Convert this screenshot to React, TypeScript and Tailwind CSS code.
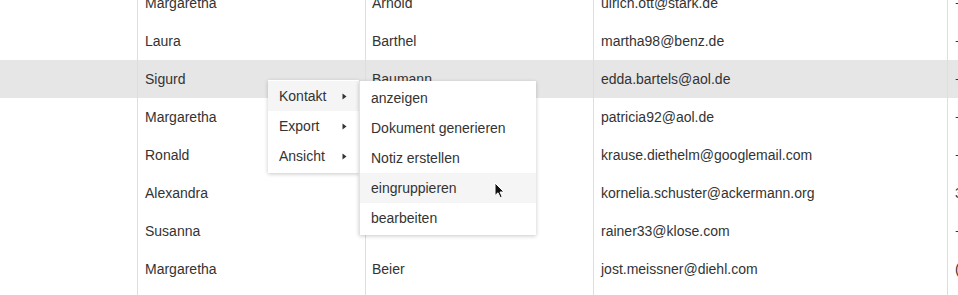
import React from "react";

type Row = { first: string; last: string; email: string; phone: string };

const ROWS: Row[] = [
  { first: "Margaretha", last: "Arnold", email: "ulrich.ott@stark.de", phone: "+49 (0) 8821 12345" },
  { first: "Laura", last: "Barthel", email: "martha98@benz.de", phone: "+49 (0) 7312 44591" },
  { first: "Sigurd", last: "Baumann", email: "edda.bartels@aol.de", phone: "+49 (0) 3301 90211" },
  { first: "Margaretha", last: "", email: "patricia92@aol.de", phone: "+49 (0) 4012 77302" },
  { first: "Ronald", last: "", email: "krause.diethelm@googlemail.com", phone: "+49 (0) 7412 55610" },
  { first: "Alexandra", last: "", email: "kornelia.schuster@ackermann.org", phone: "3591 22048" },
  { first: "Susanna", last: "", email: "rainer33@klose.com", phone: "+49 (0) 6021 11873" },
  { first: "Margaretha", last: "Beier", email: "jost.meissner@diehl.com", phone: "(0811) 448290" },
  { first: "Heinz", last: "Berger", email: "lotte.kraus@web.de", phone: "+49 (0) 2234 90117" },
];

const MAIN_MENU = ["Kontakt", "Export", "Ansicht"];
const SUB_MENU = ["anzeigen", "Dokument generieren", "Notiz erstellen", "eingruppieren", "bearbeiten"];

function Caret() {
  return (
    <svg width="5" height="7" viewBox="0 0 5 7" className="shrink-0">
      <path d="M0.5 0.5 L4.5 3.5 L0.5 6.5 Z" fill="#333" />
    </svg>
  );
}

function Cursor() {
  return (
    <svg width="12" height="17" viewBox="0 0 12 17" className="absolute left-[494px] top-[182px]">
      <path
        d="M1 1 L1 13.5 L4 10.8 L6.2 15.6 L8.2 14.7 L6 10 L10 10 Z"
        fill="#111"
        stroke="#fff"
        strokeWidth="1"
        strokeLinejoin="round"
      />
    </svg>
  );
}

export default function App() {
  return (
    <div
      className="relative w-[958px] h-[295px] overflow-hidden bg-white text-[14px] text-[#333]"
      style={{ fontFamily: '"Liberation Sans", Arial, sans-serif' }}
    >
      <div className="mt-[-16px]">
        {ROWS.map((r, i) => (
          <div key={i} className={`flex h-[38px] items-center ${i === 2 ? "bg-[#e6e6e6]" : ""}`}>
            <div className="w-[137px] h-full shrink-0" />
            <div className="w-[228px] h-full shrink-0 flex items-center border-l border-[#dedede] pl-[7px]">{r.first}</div>
            <div className="w-[228px] h-full shrink-0 flex items-center border-l border-[#dedede] pl-[6px]">{r.last}</div>
            <div className="w-[354px] h-full shrink-0 flex items-center border-l border-[#dedede] pl-[7px]">{r.email}</div>
            <div className="w-[200px] h-full shrink-0 flex items-center border-l border-[#dedede] pl-[7px] whitespace-nowrap">
              {r.phone}
            </div>
          </div>
        ))}
      </div>

      <div className="absolute left-[268px] top-[80px] w-[91px] bg-white pt-[1px] pb-[2px] shadow-[0_1px_4px_rgba(0,0,0,0.22)]">
        {MAIN_MENU.map((m, i) => (
          <div
            key={m}
            className={`flex h-[30px] items-center justify-between pl-[11px] pr-[12px] ${i === 0 ? "bg-[#f5f5f5]" : ""}`}
          >
            <span>{m}</span>
            <Caret />
          </div>
        ))}
      </div>

      <div className="absolute left-[359px] top-[81px] w-[177px] bg-white py-[2px] border-l border-[#e2e2e2] shadow-[0_1px_4px_rgba(0,0,0,0.22)]">
        {SUB_MENU.map((m, i) => (
          <div key={m} className={`flex h-[30px] items-center pl-[11px] ${i === 3 ? "bg-[#f5f5f5]" : ""}`}>
            {m}
          </div>
        ))}
      </div>

      <Cursor />
    </div>
  );
}
